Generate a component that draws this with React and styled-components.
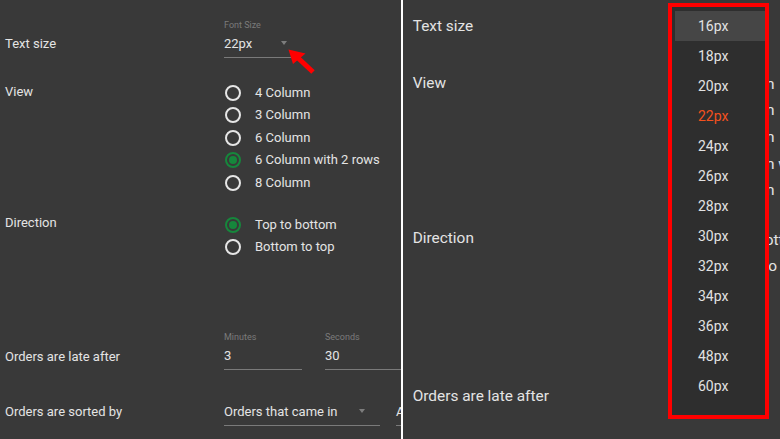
import React from "react";
import styled, { createGlobalStyle } from "styled-components";

const GlobalStyle = createGlobalStyle`
  html, body {
    margin: 0;
    padding: 0;
    background: #393939;
  }
  body {
    font-family: Roboto, "Liberation Sans", sans-serif;
  }
`;

const Shot = styled.div`
  display: flex;
  width: 780px;
  height: 439px;
  overflow: hidden;
`;

const Panel = styled.div`
  position: relative;
  flex: ${(p) => (p.$width ? `0 0 ${p.$width}px` : "1 1 0")};
  min-width: 0;
  height: 100%;
  overflow: hidden;
  background: #393939;
`;

const Divider = styled.div`
  flex: 0 0 2px;
  background: #ffffff;
`;

// the right half is the same page, photographed closer
const Zoomed = styled.div`
  zoom: 1.185;
  margin: -21.6px 0 0 3.2px;
`;

const Page = styled.div`
  width: 640px;
  padding: 18.6px 0 0 5px;
  color: #e4e4e4;
  font-size: 13px;
`;

const Row = styled.div`
  display: flex;
  margin-top: ${(p) => p.$gap || 0}px;
`;

const Label = styled.div`
  flex: 0 0 219px;
  padding-top: ${(p) => p.$offset || 0}px;
  line-height: 16px;
`;

const Controls = styled.div`
  display: flex;
  align-items: flex-start;
  gap: ${(p) => p.$gap || 0}px;
`;

const Field = styled.div`
  display: flex;
  flex-direction: column;
  width: ${(p) => p.$width}px;
`;

const Caption = styled.div`
  font-size: 9px;
  line-height: 12px;
  color: #7b7b7b;
  visibility: ${(p) => (p.$hidden ? "hidden" : "visible")};
`;

const Input = styled.div`
  display: flex;
  align-items: center;
  padding: 5px ${(p) => p.$inset || 0}px 5px 0;
  line-height: 16px;
  white-space: nowrap;
  border-bottom: 1px solid #7a7a7a;
`;

const Caret = styled.span`
  margin: -2px 0 0 auto;
  width: 0;
  height: 0;
  border-left: 3.5px solid transparent;
  border-right: 3.5px solid transparent;
  border-top: 4px solid #7d7d7d;
`;

const RadioList = styled.div`
  display: flex;
  flex-direction: column;
  padding-left: 1px;
`;

const RadioOption = styled.div`
  display: flex;
  align-items: center;
  gap: 14px;
  height: 22.4px;
  line-height: 16px;
  white-space: nowrap;
`;

const RadioDot = styled.span`
  box-sizing: border-box;
  display: grid;
  place-items: center;
  width: 16px;
  height: 16px;
  border-radius: 50%;
  border: 2px solid ${(p) => (p.$checked ? "#16873c" : "#e6e6e6")};
  &::after {
    content: "";
    width: 8px;
    height: 8px;
    border-radius: 50%;
    background: ${(p) => (p.$checked ? "#16873c" : "transparent")};
  }
`;

const Pointer = styled.svg`
  position: absolute;
  left: 283px;
  top: 45px;
`;

const MenuFrame = styled.div`
  position: absolute;
  left: 265px;
  top: 3px;
  width: 101px;
  height: 416px;
  box-sizing: border-box;
  border: 4px solid #ff0000;
  background: #2e2e2e;
  padding: 4px 0 0 3px;
`;

const MenuItem = styled.div`
  display: flex;
  align-items: center;
  height: 30px;
  padding-left: 23px;
  font-size: 14px;
  color: ${(p) => (p.$selected ? "#f4511e" : "#e2e2e2")};
  background: ${(p) => (p.$active ? "#464646" : "transparent")};
`;

const views = [
  "4 Column",
  "3 Column",
  "6 Column",
  "6 Column with 2 rows",
  "8 Column",
];
const directions = ["Top to bottom", "Bottom to top"];
const sizes = [16, 18, 20, 22, 24, 26, 28, 30, 32, 34, 36, 48, 60];

const Radios = ({ options, checked }) => (
  <RadioList>
    {options.map((o) => (
      <RadioOption key={o}>
        <RadioDot $checked={o === checked} />
        <span>{o}</span>
      </RadioOption>
    ))}
  </RadioList>
);

const SettingsPage = ({ menuOpen }) => (
  <Page>
    <Row>
      <Label $offset={17}>Text size</Label>
      <Field $width={67}>
        <Caption $hidden={menuOpen}>Font Size</Caption>
        <Input $inset={4}>
          22px
          <Caret />
        </Input>
      </Field>
    </Row>
    <Row $gap={24.2}>
      <Label $offset={2.5}>View</Label>
      <Radios options={views} checked="6 Column with 2 rows" />
    </Row>
    <Row $gap={19.7}>
      <Label $offset={2}>Direction</Label>
      <Radios options={directions} checked="Top to bottom" />
    </Row>
    <Row $gap={72.5}>
      <Label $offset={18}>Orders are late after</Label>
      <Controls $gap={23}>
        <Field $width={78}>
          <Caption>Minutes</Caption>
          <Input>3</Input>
        </Field>
        <Field $width={120}>
          <Caption>Seconds</Caption>
          <Input>30</Input>
        </Field>
      </Controls>
    </Row>
    <Row $gap={29.5}>
      <Label $offset={5}>Orders are sorted by</Label>
      <Controls $gap={16}>
        <Field $width={156}>
          <Input $inset={15}>
            Orders that came in
            <Caret />
          </Input>
        </Field>
        <Field $width={140}>
          <Input $inset={15}>
            Ascending
            <Caret />
          </Input>
        </Field>
      </Controls>
    </Row>
  </Page>
);

const App = () => (
  <>
    <GlobalStyle />
    <Shot>
      <Panel $width={401}>
        <SettingsPage />
        <Pointer width="36" height="32" viewBox="0 0 36 32">
          <polygon points="5.5,4.5 22.5,8.5 10,19" fill="#ff0000" />
          <line
            x1="14"
            y1="12"
            x2="30"
            y2="27"
            stroke="#ff0000"
            strokeWidth="5"
          />
        </Pointer>
      </Panel>
      <Divider />
      <Panel>
        <Zoomed>
          <SettingsPage menuOpen />
        </Zoomed>
        <MenuFrame>
          {sizes.map((s, i) => (
            <MenuItem key={s} $active={i === 0} $selected={s === 22}>
              {s}px
            </MenuItem>
          ))}
        </MenuFrame>
      </Panel>
    </Shot>
  </>
);

export default App;
